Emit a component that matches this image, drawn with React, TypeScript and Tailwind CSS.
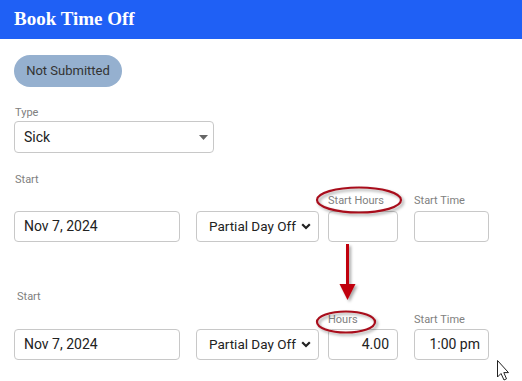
import React from 'react';

const Label = ({ children, className = '' }: { children: React.ReactNode; className?: string }) => (
  <div className={`text-[11px] leading-[14px] text-[#808080] ${className}`}>{children}</div>
);

const Box = ({ w, children, right = false }: { w: string; children?: React.ReactNode; right?: boolean }) => (
  <div
    className={`${w} h-[31px] border border-[#c8c8c8] rounded-[4px] bg-white flex items-center text-[14px] text-[#222] ${
      right ? 'justify-end pr-[8px]' : 'pl-[9px]'
    }`}
  >
    {children}
  </div>
);

const Chevron = () => (
  <svg width="10" height="7" viewBox="0 0 10 7" className="ml-auto mr-[7px]">
    <path d="M1.2 1.2 L5 5 L8.8 1.2" fill="none" stroke="#222" strokeWidth="2.2" />
  </svg>
);

const DayRow = ({ hoursLabel, hours, time, gap }: { hoursLabel: string; hours?: string; time?: string; gap: string }) => (
  <div className="flex items-end">
    <Box w="w-[166px]">Nov 7, 2024</Box>
    <div className="ml-[16px] w-[123px] h-[31px] border border-[#c8c8c8] rounded-[4px] flex items-center pl-[12px] text-[13.5px] text-[#222] whitespace-nowrap">
      Partial Day Off
      <Chevron />
    </div>
    <div className="ml-[9px] flex flex-col">
      <Label className={gap}>{hoursLabel}</Label>
      <Box w="w-[70px]" right>{hours}</Box>
    </div>
    <div className="ml-[16px] flex flex-col">
      <Label className={gap}>Start Time</Label>
      <Box w="w-[75px]" right>{time}</Box>
    </div>
  </div>
);

export default function App() {
  return (
    <div className="relative w-[522px] h-[381px] bg-white overflow-hidden" style={{ fontFamily: 'Roboto, "Noto Sans", sans-serif' }}>
      <div className="h-[39px] bg-[#1f60f5] flex items-center px-[14px]">
        <span className="text-white text-[19px] font-bold" style={{ fontFamily: '"Liberation Serif", serif' }}>
          Book Time Off
        </span>
      </div>

      <div className="px-[14px] pt-[16px]">
        <div className="w-[108px] h-[32px] rounded-full bg-[#95b0cf] flex items-center justify-center text-[13px] text-[#333]">
          Not Submitted
        </div>

        <Label className="mt-[19px] ml-[1px]">Type</Label>
        <div className="mt-[1px] w-[200px] h-[32px] border border-[#c8c8c8] rounded-[4px] flex items-center pl-[9px] text-[14px] text-[#222]">
          Sick
          <svg width="9" height="5" viewBox="0 0 9 5" className="ml-auto mr-[5px]">
            <path d="M0 0 H9 L4.5 5 Z" fill="#666" />
          </svg>
        </div>

        <Label className="mt-[20px] ml-[1px]">Start</Label>
        <div className="mt-[7px]">
          <DayRow hoursLabel="Start Hours" gap="mb-[3px]" />
        </div>

        <Label className="mt-[48px] ml-[3px]">Start</Label>
        <div className="mt-[9px]">
          <DayRow hoursLabel="Hours" hours="4.00" time="1:00 pm" gap="mb-[2px]" />
        </div>
      </div>

      {/* annotations */}
      <svg className="absolute inset-0 pointer-events-none" width="522" height="381">
        <defs>
          <filter id="sh" x="-20%" y="-40%" width="150%" height="190%">
            <feDropShadow dx="2" dy="2" stdDeviation="1.5" floodColor="#000" floodOpacity="0.35" />
          </filter>
        </defs>
        <ellipse cx="359" cy="200" rx="42" ry="12.5" fill="none" stroke="#a8101c" strokeWidth="2.2" filter="url(#sh)" />
        <ellipse cx="346" cy="322" rx="29" ry="10.5" fill="none" stroke="#a8101c" strokeWidth="2.2" filter="url(#sh)" />
        <g filter="url(#sh)">
          <rect x="346" y="244" width="3" height="41" fill="#c00010" />
          <path d="M339.5 284 H355.5 L347.5 300 Z" fill="#c00010" />
        </g>
        <path
          d="M497.5 360.5 V377 L501 373.5 L504 380 L506.5 378.8 L503.8 372.6 L508.5 372.6 Z"
          fill="#fff"
          stroke="#222"
          strokeWidth="1"
        />
      </svg>
    </div>
  );
}
